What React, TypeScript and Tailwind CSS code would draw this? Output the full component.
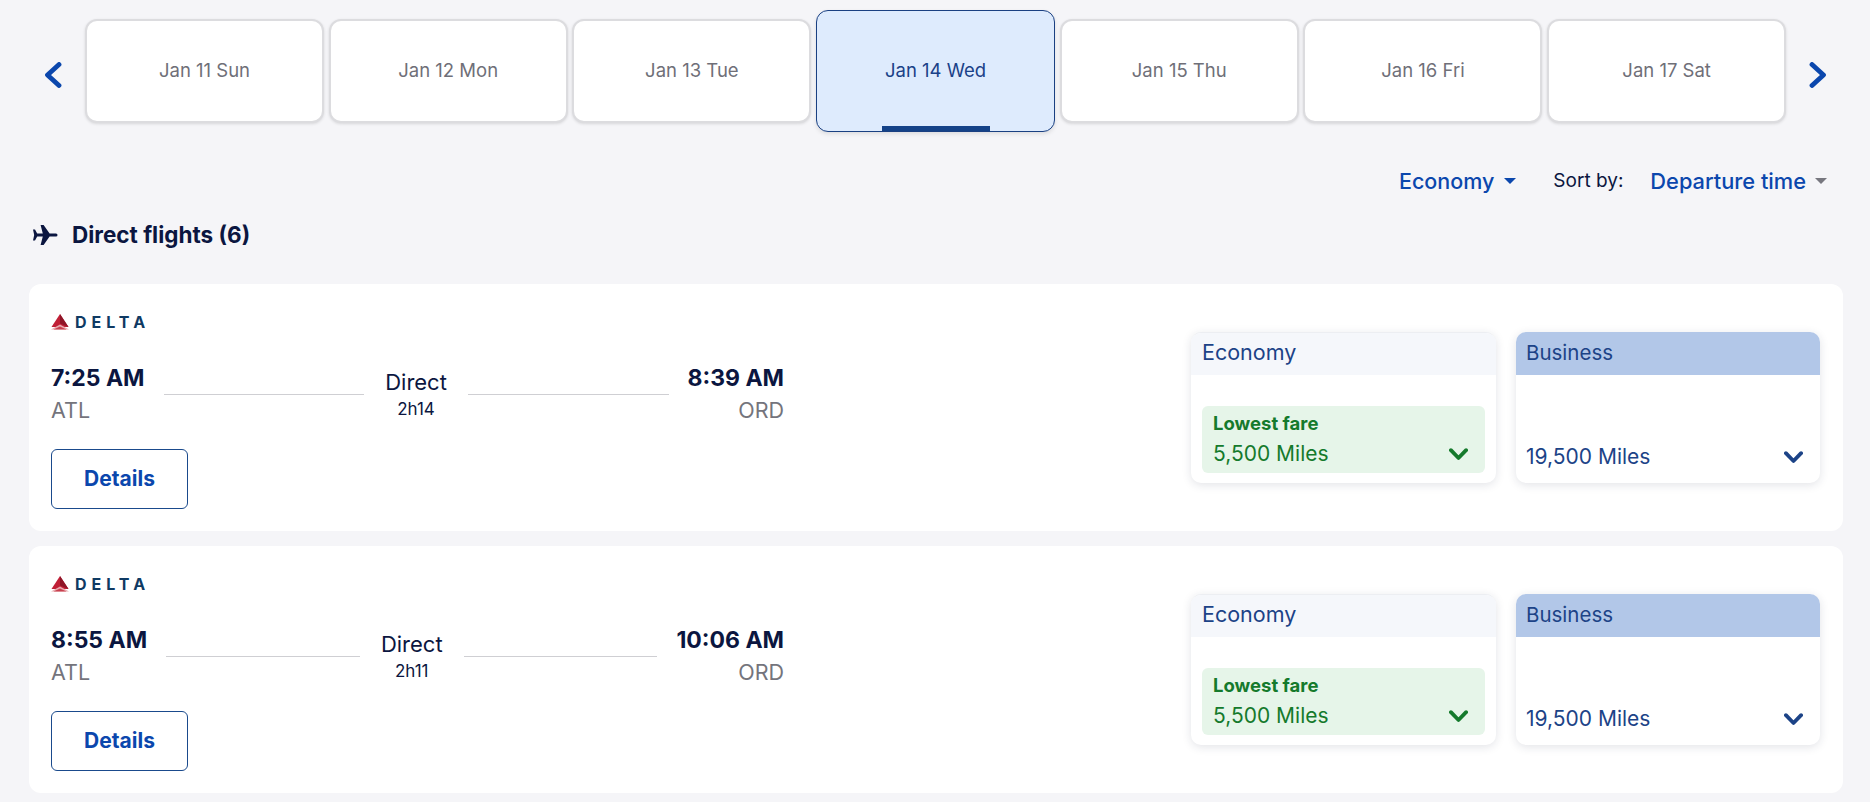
import React from "react";

const days = [
  "Jan 11 Sun",
  "Jan 12 Mon",
  "Jan 13 Tue",
  "Jan 14 Wed",
  "Jan 15 Thu",
  "Jan 16 Fri",
  "Jan 17 Sat",
];

const flights = [
  { dep: "7:25 AM", arr: "8:39 AM", time: "2h14" },
  { dep: "8:55 AM", arr: "10:06 AM", time: "2h11" },
];

const Chevron = ({ dir }: { dir: "left" | "right" }) => (
  <svg width="18" height="26" viewBox="0 0 18 26" fill="none" className="mt-2 shrink-0">
    <path
      d={dir === "left" ? "M15 2.500 L3.500 13 L15 23.500" : "M3 2.500 L14.500 13 L3 23.500"}
      stroke="#0b47ad"
      strokeWidth="4.800"
      strokeLinecap="round"
      strokeLinejoin="round"
    />
  </svg>
);

const Caret = ({ color }: { color: string }) => (
  <svg width="12" height="6" viewBox="0 0 12 6" className="shrink-0">
    <path d="M0 0 H12 L6 6 Z" fill={color} />
  </svg>
);

const Plane = () => (
  <svg width="25" height="20" viewBox="0 0 25 20" className="shrink-0">
    <path
      d="M0 4.500 h2 l2.200 4 h5.600 L7.600 0 h3 l6 8.500 h6.400 a1.500 1.500 0 0 1 0 3 h-6.400 L10.600 20 h-3 l2.200 -8.500 H4.200 L2 15.500 H0 l1.200 -5.500 z"
      fill="#0b1640"
    />
  </svg>
);

const DeltaLogo = () => (
  <div className="flex items-center h-[16px]">
    <svg width="18" height="16" viewBox="0 0 18 16" className="shrink-0">
      <polygon points="9,0 17.500,13 0.500,13" fill="#c01f36" />
      <polygon points="9,0 17.500,13 9,9.500" fill="#8f1527" />
      <polygon points="0,15.500 9,10.500 18,15.500" fill="#e9a9ae" />
      <polygon points="2.500,15.500 9,12.500 15.500,15.500" fill="#c8404f" />
    </svg>
    <span className="ml-[6px] text-[16px] leading-4 font-bold tracking-[5px] text-[#0f3a63]">DELTA</span>
  </div>
);

const ChevronDown = ({ color }: { color: string }) => (
  <svg width="19" height="13" viewBox="0 0 19 13" fill="none" className="shrink-0">
    <path d="M1.900 2.200 L9.500 10 L17.100 2.200" stroke={color} strokeWidth="3.800" strokeLinecap="round" strokeLinejoin="round" />
  </svg>
);

const FareCard = () => (
  <div className="flex items-start mt-[48px] gap-[20px]">
    <div className="w-[305px] h-[151px] bg-white rounded-[10px] overflow-hidden border-t border-[#eceef2] shadow-[0_2px_10px_rgba(30,40,70,0.13)]">
      <div className="h-[42px] bg-[#f5f7fb] px-[11px] flex items-center text-[21.500px] pb-[3px] text-[#1c4387]">Economy</div>
      <div className="mx-[11px] mt-[31px] h-[67px] rounded-[6px] bg-[#e6f5e9] pl-[11px] pr-[17px] pt-[6px] text-[#157a2c]">
        <div className="text-[18.500px] leading-[22px] font-bold">Lowest fare</div>
        <div className="flex items-center justify-between mt-[7px]">
          <span className="text-[21px] leading-[26px]">5,500 Miles</span>
          <ChevronDown color="#157a2c" />
        </div>
      </div>
    </div>
    <div className="w-[304px] h-[151px] bg-white rounded-[10px] overflow-hidden shadow-[0_2px_10px_rgba(30,40,70,0.13)]">
      <div className="h-[43px] bg-[#b2c7e8] px-[10px] flex items-center text-[20.500px] pb-[1px] text-[#1c4387]">Business</div>
      <div className="flex items-center justify-between mt-[69px] pl-[10px] pr-[17px] text-[#1c4387]">
        <span className="text-[21px] leading-[26px]">19,500 Miles</span>
        <ChevronDown color="#1c4387" />
      </div>
    </div>
  </div>
);

const FlightCard = ({ flight }: { flight: (typeof flights)[number] }) => (
  <div className="w-[1814px] h-[247px] ml-[29px] bg-white rounded-[12px] flex justify-between pl-[22px] pr-[23px]">
    <div className="w-[733px] pt-[30px]">
      <DeltaLogo />
      <div className="flex items-start mt-[32px]">
        <div>
          <div className="text-[23px] leading-[32px] font-bold text-[#0b1640]">{flight.dep}</div>
          <div className="text-[21.500px] leading-[26px] mt-[3px] text-[#74747c]">ATL</div>
        </div>
        <div className="flex-1 h-px bg-[#cfcfd3] mt-[32px] ml-[19px]" />
        <div className="mx-[21px] mt-[7px] text-center text-[#0b1640]">
          <div className="text-[22px] leading-[26px]">Direct</div>
          <div className="text-[17px] leading-[20px] mt-[4px]">{flight.time}</div>
        </div>
        <div className="flex-1 h-px bg-[#cfcfd3] mt-[32px] mr-[19px]" />
        <div className="text-right">
          <div className="text-[23px] leading-[32px] font-bold text-[#0b1640]">{flight.arr}</div>
          <div className="text-[21.500px] leading-[26px] mt-[3px] text-[#74747c]">ORD</div>
        </div>
      </div>
      <button className="block mt-[26px] w-[137px] h-[60px] rounded-[6px] border border-[#1a4a8c] text-[21px] font-bold text-[#0b47ad]">
        Details
      </button>
    </div>
    <FareCard />
  </div>
);

export default function App() {
  return (
    <div className="w-[1870px] h-[802px] overflow-hidden bg-[#f5f5f8] font-['Inter',sans-serif]">
      <div className="flex items-center h-[122px] mt-[10px] pl-[44px]">
        <Chevron dir="left" />
        <div className="flex items-center gap-[4.700px] ml-[23px] mr-[23px]">
          {days.map((d) => {
            const active = d === "Jan 14 Wed";
            return active ? (
              <div
                key={d}
                className="relative w-[239px] h-[122px] rounded-[12px] border border-[#1a4082] bg-[#deebfd] flex items-center justify-center text-[18.500px] text-[#1a4188] shadow-[0_2px_4px_rgba(0,0,0,0.1)]"
              >
                {d}
                <div className="absolute bottom-0 left-[65px] w-[108px] h-[5px] bg-[#144288]" />
              </div>
            ) : (
              <div
                key={d}
                className="w-[239px] h-[104px] rounded-[12px] border-2 border-[#dcdcdf] bg-white flex items-center justify-center text-[18.500px] text-[#6f6f78] shadow-[0_1px_3px_rgba(0,0,0,0.12)]"
              >
                {d}
              </div>
            );
          })}
        </div>
        <Chevron dir="right" />
      </div>

      <div className="flex items-center justify-end h-[30px] mt-[34px] pr-[43px]">
        <span className="text-[21.500px] font-medium text-[#0b47ad]">Economy</span>
        <span className="ml-[10px]"><Caret color="#0b47ad" /></span>
        <span className="ml-[37px] text-[19px] text-[#0b1640]">Sort by:</span>
        <span className="ml-[27px] text-[21.800px] font-medium text-[#0b47ad]">Departure time</span>
        <span className="ml-[9px]"><Caret color="#77777f" /></span>
      </div>

      <div className="flex items-center h-[30px] mt-[24px] pl-[33px]">
        <Plane />
        <span className="ml-[14px] text-[22.500px] font-bold text-[#0b1640]">Direct flights (6)</span>
      </div>

      <div className="flex flex-col gap-[15px] mt-[34px]">
        {flights.map((f) => (
          <FlightCard key={f.dep} flight={f} />
        ))}
      </div>
    </div>
  );
}
